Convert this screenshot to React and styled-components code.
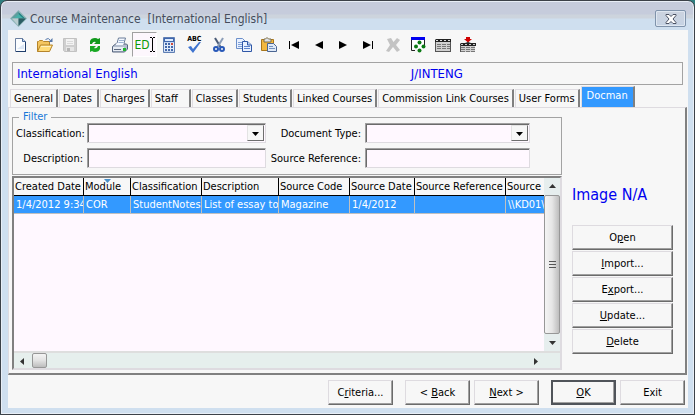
import React, { useState } from "react";
import styled, { createGlobalStyle } from "styled-components";

const TABS = [
  "General",
  "Dates",
  "Charges",
  "Staff",
  "Classes",
  "Students",
  "Linked Courses",
  "Commission Link Courses",
  "User Forms",
  "Docman",
];

const COLUMNS = [
  { name: "Created Date", width: 70, value: "1/4/2012 9:34" },
  { name: "Module", width: 47, value: "COR", sorted: true },
  { name: "Classification", width: 71, value: "StudentNotes" },
  { name: "Description", width: 77, value: "List of essay top" },
  { name: "Source Code", width: 71, value: "Magazine" },
  { name: "Source Date", width: 65, value: "1/4/2012" },
  { name: "Source Reference", width: 91, value: "" },
  { name: "Source", width: 50, value: "\\\\KD01\\" },
];

const TOOLS = [
  {
    label: "New",
    icon: (
      <>
        <path d="M3.5 1.5h7l3 3v10h-10z" fill="#fbfdff" stroke="#6b7f9f" />
        <path d="M13.5 5v10M4 14.5h10" stroke="#1f3d6b" />
        <path d="M10.5 1.5v3h3" fill="#c6d5ea" stroke="#4a6a9a" />
        <path d="M5 12h7V7z" fill="#dce7f5" />
      </>
    ),
  },
  {
    label: "Open",
    icon: (
      <>
        <path d="M0.5 14.5v-10h1l1-1h3l1 1h6v4" fill="#f4c660" stroke="#b5842a" />
        <path d="M0.5 14.5l3-6.500h12l-3 6.500z" fill="#ffdc7a" stroke="#b5842a" />
        <path d="M4 9.500h10" stroke="#fff1bd" />
        <path d="M8.500 2.500q3-2.500 5 1" fill="none" stroke="#5577aa" />
        <path d="M15.500 1v4h-4z" fill="#5577aa" />
      </>
    ),
  },
  {
    label: "Save",
    disabled: true,
    icon: (
      <>
        <path d="M1.500 1.500h13v13h-12l-1-1z" fill="#cfcfcf" stroke="#c2c2c2" />
        <path d="M4 2h8v6H4z" fill="#f3f3f3" />
        <path d="M5 4.500h6M5 6.500h6" stroke="#dadada" />
        <path d="M4 10h8v4H4z" fill="#e6e6e6" />
        <path d="M5 11h3v3H5z" fill="#b5b5b5" />
      </>
    ),
  },
  {
    label: "Refresh",
    icon: (
      <>
        <path d="M3 7V4q1-3 5-3 2 0 3 1l2-1v6H7l2-2q-3-1-4 2z" fill="#129a1d" />
        <path d="M13 9v3q-1 3-5 3-2 0-3-1l-2 1V9h6l-2 2q3 1 4-2z" fill="#18a824" />
      </>
    ),
  },
  {
    label: "Print",
    icon: (
      <>
        <path d="M4.500 8l2-7h7l-2 7z" fill="#f4f8ff" stroke="#6a7d99" />
        <path d="M7 3.500h5M6.500 5.500h5" stroke="#9db3d3" />
        <path d="M0.500 9.500l3-2.500h11l1 1v4l-3 3H.5z" fill="#b4bfd0" stroke="#56657e" />
        <path d="M4 7l1-1h7l-1 2H4z" fill="#f4f8ff" />
        <path d="M1 10h11v4H1z" fill="#e7ecf3" />
        <path d="M2 12.500h7" stroke="#5d6a80" />
        <path d="M11 11h3v3h-3z" fill="#1eb52e" />
      </>
    ),
  },
  { label: "Edit", pressed: true },
  {
    label: "Calculator",
    icon: (
      <>
        <path d="M2.500 0.500h11v15h-11z" fill="#a9bfe4" stroke="#5f7eb3" />
        <path d="M3 1h10v4H3z" fill="#3f66ad" />
        <path d="M4 2h8v2H4z" fill="#dcebff" />
        <path d="M3 5.500h10v9H3z" fill="#e3ecfa" />
        <path d="M4 7h2M7 7h2M4 10h2M7 10h2M4 13h2M7 13h2" stroke="#4368ab" strokeWidth="2" />
        <path d="M10 7h2" stroke="#d04a3c" strokeWidth="2" />
        <path d="M10 10h2M10 13h2" stroke="#4368ab" strokeWidth="2" />
      </>
    ),
  },
  { label: "Spelling", spelling: true },
  {
    label: "Cut",
    icon: (
      <>
        <path d="M4 1l5.500 9" stroke="#4a5b78" strokeWidth="2" />
        <path d="M12 1l-5.500 9" stroke="#8b9db8" strokeWidth="2" />
        <circle cx="5" cy="12" r="2" fill="none" stroke="#2858b8" strokeWidth="2" />
        <circle cx="11" cy="12" r="2" fill="none" stroke="#2858b8" strokeWidth="2" />
      </>
    ),
  },
  {
    label: "Copy",
    icon: (
      <>
        <path d="M0.500 1.500h6l3 3v7h-9z" fill="#e9f1ff" stroke="#6b8fca" />
        <path d="M2 5.500h4M2 7.500h4M2 9.500h4" stroke="#7fa0d8" />
        <path d="M6.500 4.500h5l4 3.500v6.500h-9z" fill="#e9f1ff" stroke="#2f57a6" />
        <path d="M11.500 4.500v3.500h4" fill="#c2d5f5" stroke="#2f57a6" />
        <path d="M8 9.500h6M8 11.500h6" stroke="#5c83cc" />
      </>
    ),
  },
  {
    label: "Paste",
    icon: (
      <>
        <path d="M0.500 2.500h12v11h-12z" fill="#f3b83f" stroke="#a8761c" />
        <path d="M3 5V2h1.500q1.500-3 3 0H10v3z" fill="#dfe3ea" stroke="#7c6c45" />
        <path d="M6.500 6.500h6l3 3v5h-9z" fill="#dfe9f7" stroke="#4a6592" />
        <path d="M8 9.500h4M8 11.500h6" stroke="#7391bf" />
      </>
    ),
  },
  {
    label: "First",
    icon: (
      <>
        <path d="M3.500 4v8" stroke="#000" />
        <path d="M13 4v8L5 8z" fill="#000" />
      </>
    ),
  },
  { label: "Previous", icon: <path d="M12 4v8L4 8z" fill="#000" /> },
  { label: "Next", icon: <path d="M4 4v8l8-4z" fill="#000" /> },
  {
    label: "Last",
    icon: (
      <>
        <path d="M12.500 4v8" stroke="#000" />
        <path d="M3 4v8l8-4z" fill="#000" />
      </>
    ),
  },
  {
    label: "Cancel",
    disabled: true,
    icon: <path d="M2 2l4-1 2.500 4L12 1l3 2-4 5 4 5-3 2-4-5-4 5-3-1 4-6z" fill="#c3c3c3" />,
  },
  {
    label: "Workflow",
    icon: (
      <>
        <path d="M1.500 1v12.500H5M14.500 1v7" fill="none" stroke="#222" />
        <path d="M1 0h14v3H1z" fill="#0000f0" />
        <path d="M2 3h12v9H2z" fill="#fff" />
        <g fill="#0b7a14">
          <circle cx="9.500" cy="5.500" r="2" />
          <circle cx="6" cy="9.500" r="2" />
          <circle cx="13.500" cy="9.500" r="2" />
          <circle cx="9.500" cy="13.500" r="2" />
        </g>
      </>
    ),
  },
  {
    label: "Grid",
    icon: (
      <>
        <path d="M0 5V3l1-1h15v3z" fill="#222" />
        <path d="M1 3.500h14" stroke="#ddd" strokeDasharray="2 2" />
        <path d="M1 5h14v10H1z" fill="#d0d0d0" />
        <path d="M.5 5v10M15.500 5v9M0 14.500h16" stroke="#555" />
        <path d="M2 7.500h13M2 9.500h13M2 11.500h13" stroke="#777" strokeDasharray="4 1" />
      </>
    ),
  },
  {
    label: "Insert row",
    icon: (
      <>
        <path d="M6 0h4v2h2L8 5.500 4 2h2z" fill="#d00000" />
        <path d="M0 9V7l1-1h4l3-1 3 1h5v3z" fill="#222" />
        <path d="M1 7.500h14" stroke="#ccc" strokeDasharray="2 2" />
        <path d="M1 9h14v6H1z" fill="#d0d0d0" />
        <path d="M.5 8v7" stroke="#555" />
        <path d="M1 10.500h15M1 12.500h15M1 14.500h15" stroke="#777" strokeDasharray="4 1" />
      </>
    ),
  },
];

function Hot({ before, letter, after }) {
  return (
    <span>
      {before}
      <u>{letter}</u>
      {after}
    </span>
  );
}

function Triangle({ d, color = "#000" }) {
  return (
    <svg width="7" height="7" viewBox="0 0 7 7" aria-hidden="true">
      <path d={d} fill={color} />
    </svg>
  );
}

function ToolIcon({ tool }) {
  if (tool.pressed) {
    return (
      <EditMark>
        ED
        <svg width="5" height="15" viewBox="0 0 5 15" aria-hidden="true">
          <path d="M0 .5h2M3 .5h2M2.500 1v13M0 14.500h2M3 14.500h2" stroke="#000" />
        </svg>
      </EditMark>
    );
  }
  if (tool.spelling) {
    return (
      <SpellMark>
        ABC
        <svg width="14" height="11" viewBox="0 0 14 11" aria-hidden="true">
          <path d="M1 5l3-1 2 3 6-7h2L6 11z" fill="#3f74cf" />
        </svg>
      </SpellMark>
    );
  }
  return (
    <svg width="16" height="16" viewBox="0 0 16 16" aria-hidden="true">
      {tool.icon}
    </svg>
  );
}

function App() {
  const [tab, setTab] = useState("Docman");

  return (
    <>
      <GlobalStyle />
      <Window>
        <TitleBar>
          <svg width="17" height="17" viewBox="0 0 17 17" aria-hidden="true">
            <path d="M8.500 0L17 8.500 8.500 17 0 8.500z" fill="#8fb5b8" />
            <path d="M8.500 1v7.500H1z" fill="#5f9c9c" />
            <path d="M8.500 2v6.500H15z" fill="#1d7f80" />
            <path d="M8.500 16V8.500H2z" fill="#b9cdd0" />
            <path d="M8.500 16V8.500H16z" fill="#2b5d63" />
            <path d="M4 8h9L8.500 4z" fill="#46b0a8" />
          </svg>
          <h1>Course Maintenance&nbsp; [International English]</h1>
          <CloseButton aria-label="Close">
            <svg width="12" height="10" viewBox="0 0 12 10" aria-hidden="true">
              <path
                d="M1 .5h3l2 2 2-2h3v1L8 5l3 3.500v1H8l-2-2-2 2H1v-1L4 5 1 1.500z"
                fill="#fff"
                stroke="#4b5263"
              />
            </svg>
          </CloseButton>
        </TitleBar>

        <Client>
          <Toolbar>
            {TOOLS.map((tool) => (
              <ToolButton
                key={tool.label}
                aria-label={tool.label}
                disabled={tool.disabled}
                $pressed={tool.pressed}
              >
                <ToolIcon tool={tool} />
              </ToolButton>
            ))}
          </Toolbar>

          <CourseInfo>
            <span>International English</span>
            <span>J/INTENG</span>
          </CourseInfo>

          <TabList role="tablist">
            {TABS.map((name) => (
              <Tab
                key={name}
                role="tab"
                aria-selected={tab === name}
                $active={tab === name}
                onClick={() => setTab(name)}
              >
                {name}
              </Tab>
            ))}
          </TabList>

          <TabPanel role="tabpanel">
            <Documents>
              <Filter>
                <legend>Filter</legend>
                <label htmlFor="classification">Classification:</label>
                <SelectBox>
                  <select id="classification" />
                  <SelectArrow aria-hidden="true">
                    <Triangle d="M0 2h7L3.500 6z" />
                  </SelectArrow>
                </SelectBox>
                <label htmlFor="document-type">Document Type:</label>
                <SelectBox>
                  <select id="document-type" />
                  <SelectArrow aria-hidden="true">
                    <Triangle d="M0 2h7L3.500 6z" />
                  </SelectArrow>
                </SelectBox>
                <label htmlFor="description">Description:</label>
                <TextInput id="description" type="text" />
                <label htmlFor="source-reference">Source Reference:</label>
                <TextInput id="source-reference" type="text" />
              </Filter>

              <GridBox>
                <GridBody>
                  <TableArea>
                    <Table>
                      <colgroup>
                        {COLUMNS.map((col) => (
                          <Col key={col.name} $width={col.width} />
                        ))}
                      </colgroup>
                      <thead>
                        <tr>
                          {COLUMNS.map((col) => (
                            <th key={col.name}>
                              {col.name}
                              {col.sorted && (
                                <SortMark>
                                  <Triangle d="M0 0h7L3.500 4z" color="#4a90c8" />
                                </SortMark>
                              )}
                            </th>
                          ))}
                        </tr>
                      </thead>
                      <tbody>
                        <tr>
                          {COLUMNS.map((col) => (
                            <td key={col.name}>{col.value}</td>
                          ))}
                        </tr>
                      </tbody>
                    </Table>
                  </TableArea>
                  <VerticalBar>
                    <ScrollButton aria-label="Scroll up">
                      <Triangle d="M0 5h7L3.500 1z" color="#333" />
                    </ScrollButton>
                    <VerticalThumb>
                      <svg width="7" height="8" viewBox="0 0 7 8" aria-hidden="true">
                        <path d="M0 .5h7M0 3.500h7M0 6.500h7" stroke="#555" />
                      </svg>
                    </VerticalThumb>
                    <ScrollButton aria-label="Scroll down">
                      <Triangle d="M0 2h7L3.500 6z" color="#333" />
                    </ScrollButton>
                  </VerticalBar>
                </GridBody>
                <HorizontalBar>
                  <ScrollButton aria-label="Scroll left">
                    <Triangle d="M5 0v7L1 3.500z" color="#333" />
                  </ScrollButton>
                  <HorizontalThumb />
                  <ScrollButton aria-label="Scroll right">
                    <Triangle d="M2 0v7l4-3.500z" color="#333" />
                  </ScrollButton>
                </HorizontalBar>
              </GridBox>
            </Documents>

            <Actions>
              <ImageNote>Image N/A</ImageNote>
              <Button>
                <Hot before="O" letter="p" after="en" />
              </Button>
              <Button>
                <Hot letter="I" after="mport..." />
              </Button>
              <Button>
                <Hot before="E" letter="x" after="port..." />
              </Button>
              <Button>
                <Hot letter="U" after="pdate..." />
              </Button>
              <Button>
                <Hot letter="D" after="elete" />
              </Button>
            </Actions>
          </TabPanel>

          <Footer>
            <Button>
              <Hot before="C" letter="r" after="iteria..." />
            </Button>
            <ButtonPair>
              <Button>
                <Hot before="&lt; " letter="B" after="ack" />
              </Button>
              <Button>
                <Hot letter="N" after="ext &gt;" />
              </Button>
            </ButtonPair>
            <ButtonPair>
              <Button $primary>
                <Hot letter="O" after="K" />
              </Button>
              <Button>Exit</Button>
            </ButtonPair>
          </Footer>
        </Client>
      </Window>
    </>
  );
}

const GlobalStyle = createGlobalStyle`
  * {
    box-sizing: border-box;
  }

  body {
    margin: 0;
    background: #2f7f80;
  }

  body, button, input, select {
    font-family: "DejaVu Sans Condensed", Tahoma, sans-serif;
    font-size: 11px;
    color: #000;
  }
`;

const Window = styled.div`
  min-height: 100vh;
  display: flex;
  flex-direction: column;
  padding: 2px 6px 6px 7px;
  border: 1px solid #3c4148;
  border-radius: 7px 7px 0 0;
  background: linear-gradient(#c6ccdc 0, #c6ccdc 13px, #cdd4dd 14px, #cdd4dd 17px, #cfdfef 18px);
  box-shadow: inset 0 0 0 1px #e8eef6;
`;

const TitleBar = styled.header`
  height: 27px;
  display: flex;
  align-items: center;
  gap: 3px;
  padding: 4px 2px 0;

  h1 {
    flex: 1;
    margin: 0;
    font-size: 12px;
    font-weight: 400;
    color: #464d5c;
  }
`;

const CloseButton = styled.button`
  width: 31px;
  height: 17px;
  display: flex;
  align-items: center;
  justify-content: center;
  padding: 0;
  border: 1px solid #8093ab;
  border-radius: 2px;
  background: linear-gradient(#ccd3df, #c6d3e4);
  box-shadow: inset 0 0 0 1px #dfe7f1;
`;

const Client = styled.main`
  flex: 1;
  display: flex;
  flex-direction: column;
  background: #f7f7f7;
`;

const Toolbar = styled.div`
  max-width: 472px;
  display: grid;
  grid-template-columns: repeat(19, 1fr);
  padding-top: 2px;
`;

const ToolButton = styled.button`
  height: 25px;
  display: flex;
  align-items: center;
  justify-content: center;
  padding: 0;
  background: ${(p) => (p.$pressed ? "#fdf7fd" : "transparent")};
  border: 1px solid transparent;
  border-color: ${(p) => (p.$pressed ? "#a0a0a0 #fff #fff #a0a0a0" : "transparent")};
`;

const EditMark = styled.span`
  display: flex;
  align-items: center;
  font-size: 12px;
  color: #0a9a0a;
`;

const SpellMark = styled.span`
  display: flex;
  flex-direction: column;
  align-items: center;
  font-size: 7px;
  font-weight: 700;
  line-height: 5px;
`;

const CourseInfo = styled.div`
  display: grid;
  grid-template-columns: 395fr 268fr;
  align-items: center;
  height: 23px;
  margin: 5px 5px 0 4px;
  padding: 0 4px;
  border: 1px solid #a3a3a3;
  font-size: 13px;
  color: #0000f0;
`;

const TabList = styled.div`
  display: flex;
  align-items: flex-end;
  gap: 1px;
  height: 22px;
  padding-left: 2px;
`;

const Tab = styled.button`
  min-width: 40px;
  height: ${(p) => (p.$active ? 21 : 18)}px;
  padding: ${(p) => (p.$active ? "0 5px 3px" : "0 3px")};
  border: 1px solid #e0dde2;
  border-right: 2px solid #808080;
  border-bottom: 0;
  background: ${(p) => (p.$active ? "#3399ff" : "#f7f7f7")};
  color: ${(p) => (p.$active ? "#fff" : "#000")};
  text-align: left;
  white-space: nowrap;
`;

const TabPanel = styled.section`
  flex: 1;
  display: flex;
  gap: 10px;
  padding: 3px 12px 3px 3px;
  margin-right: 1px;
  border: 1px solid #dedbe0;
  border-right: 2px solid #808080;
  border-bottom: 2px solid #808080;
`;

const Documents = styled.div`
  flex: 1;
  min-width: 0;
  display: flex;
  flex-direction: column;
`;

const Filter = styled.fieldset`
  display: grid;
  grid-template-columns: 67px 179fr 91px 165fr 27px;
  column-gap: 4px;
  row-gap: 5px;
  align-items: center;
  margin: 0;
  padding: 0 0 6px 3px;
  border: 1px solid #a3a3a3;

  legend {
    margin-left: 3px;
    padding: 0 4px;
    line-height: 12px;
    color: #1a78d8;
  }

  label {
    text-align: right;
    white-space: nowrap;
  }

  > :nth-child(4n + 2) {
    grid-column: 1;
  }
`;

const SelectBox = styled.div`
  display: flex;
  height: 20px;
  border: 1px solid;
  border-color: #a0a0a0 #dedbe0 #dedbe0 #a0a0a0;
  background: #fff8ff;
  box-shadow: inset 1px 1px #6b6b6b;
  padding: 1px;

  select {
    flex: 1;
    min-width: 0;
    border: 0;
    background: transparent;
    appearance: none;
  }
`;

const SelectArrow = styled.span`
  width: 17px;
  display: flex;
  align-items: center;
  justify-content: center;
  border: 1px solid;
  border-color: #e3e3e3 #6e6e6e #6e6e6e #e3e3e3;
  background: #f7f7f7;
  pointer-events: none;
`;

const TextInput = styled.input`
  width: 100%;
  height: 20px;
  padding: 0 3px;
  border: 1px solid;
  border-color: #a0a0a0 #dedbe0 #dedbe0 #a0a0a0;
  background: #fff8ff;
  box-shadow: inset 1px 1px #6b6b6b;
`;

const GridBox = styled.div`
  flex: 1;
  display: flex;
  flex-direction: column;
  margin-top: 1px;
  border: 2px solid;
  border-color: #808080 #dedbe0 #dedbe0 #808080;
  background: #fff8ff;
`;

const GridBody = styled.div`
  flex: 1;
  display: flex;
`;

const TableArea = styled.div`
  flex: 1;
  min-width: 0;
  overflow: hidden;
`;

const Table = styled.table`
  width: 542px;
  table-layout: fixed;
  border-collapse: separate;
  border-spacing: 0;

  th,
  td {
    height: 18px;
    padding: 0 0 0 1px;
    overflow: hidden;
    font-weight: 400;
    text-align: left;
    white-space: nowrap;
  }

  th {
    position: relative;
    border-right: 1px solid #000;
    border-bottom: 1px solid #000;
    background: #f7f7f7;
  }

  td {
    padding-left: 2px;
    border-right: 1px solid #c0c0c0;
    border-bottom: 1px solid #c0c0c0;
    background: #3399ff;
    color: #fff;
  }
`;

const Col = styled.col`
  width: ${(p) => p.$width}px;
`;

const SortMark = styled.span`
  position: absolute;
  top: 1px;
  left: 20px;
  line-height: 0;
`;

const VerticalBar = styled.div`
  width: 16px;
  display: flex;
  flex-direction: column;
  background: #e6eeee;
`;

const HorizontalBar = styled.div`
  display: flex;
  height: 17px;
  padding-right: 17px;
  border-top: 2px solid #dedede;
  background: #e6efed;
`;

const ScrollButton = styled.button`
  width: 16px;
  height: 17px;
  display: flex;
  align-items: center;
  justify-content: center;
  padding: 0;
  border: 0;
  background: transparent;
`;

const VerticalThumb = styled.div`
  flex: 1;
  display: flex;
  align-items: center;
  justify-content: center;
  border: 1px solid #979797;
  border-radius: 2px;
  background: linear-gradient(90deg, #f4f4f4, #e6e6e6 50%, #bdbdbd);
`;

const HorizontalThumb = styled.div`
  width: 15px;
  height: 15px;
  margin: 0 auto 0 2px;
  border: 1px solid #979797;
  border-radius: 2px;
  background: linear-gradient(#f4f4f4, #e2e2e2 50%, #bdbdbd);
`;

const Actions = styled.div`
  width: 101px;
  display: flex;
  flex-direction: column;
  gap: 1px;
`;

const ImageNote = styled.p`
  margin: 73px 0 19px;
  font-size: 16px;
  line-height: 21px;
  white-space: nowrap;
  color: #0000f0;
`;

const Button = styled.button`
  min-width: 65px;
  height: 25px;
  padding: 0 4px;
  border: ${(p) => (p.$primary ? "2px" : "1px")} solid;
  border-color: ${(p) => (p.$primary ? "#50545a" : "#dedbe0 #6b6b6b #6b6b6b #dedbe0")};
  background: #f7f7f7;
  box-shadow: inset -1px -1px #a0a0a0;

  u {
    text-underline-offset: 1px;
  }
`;

const Footer = styled.footer`
  display: flex;
  justify-content: flex-end;
  gap: 12px;
  padding: 5px 3px 3px;
`;

const ButtonPair = styled.div`
  display: flex;
  gap: 4px;
`;

export default App;
